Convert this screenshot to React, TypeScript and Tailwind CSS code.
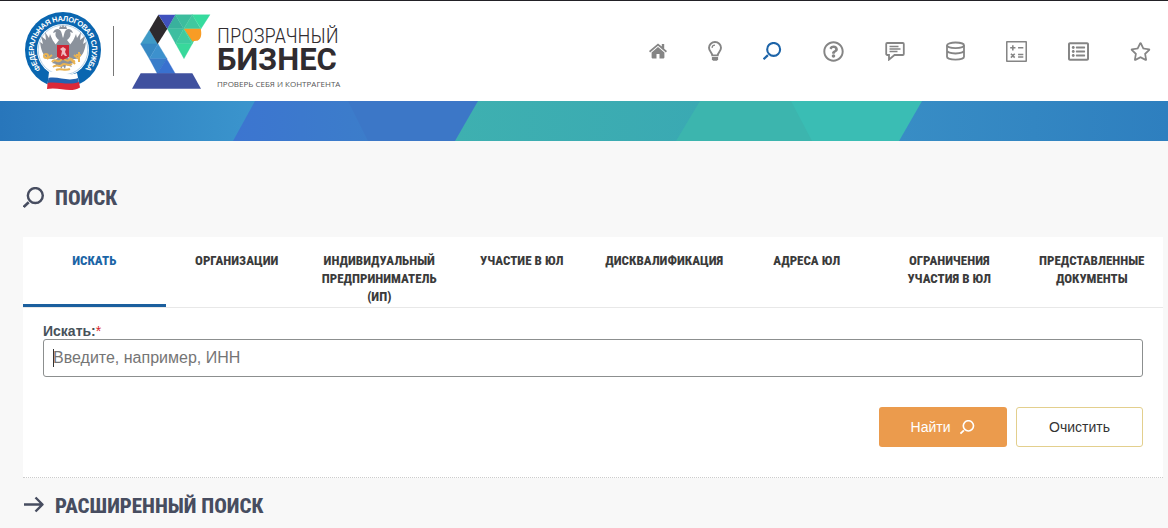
import type { ReactNode } from "react";
import { FaRegListAlt, FaRegQuestionCircle, FaRegStar } from "react-icons/fa";

const tabs = [
  "Искать",
  "Организации",
  "Индивидуальный предприниматель (ИП)",
  "Участие в ЮЛ",
  "Дисквалификация",
  "Адреса ЮЛ",
  "Ограничения участия в ЮЛ",
  "Представленные документы",
];

function SearchIcon({ className }: { className?: string }) {
  return (
    <svg viewBox="0 0 20 20" fill="none" stroke="currentColor" className={className} aria-hidden="true">
      <circle cx="11.200" cy="7.800" r="6.800" strokeWidth="2.200" />
      <path d="M5.200 13.900.6 18.200" strokeWidth="2.400" />
    </svg>
  );
}

function HomeIcon() {
  return (
    <svg viewBox="0 0 18 16" fill="currentColor" className="w-[18px]" aria-hidden="true">
      <path d="M9 .5 0 8.1l1.1 1.3L9 2.8l7.9 6.6L18 8.1l-2.8-2.4V1h-2.4v2.6z" />
      <path d="M9 4.1 2.600 9.400v5.200c0 .5.3.8.8.8h4.100v-4.500h3v4.500h4.100c.5 0 .8-.3.8-.8V9.400z" />
    </svg>
  );
}

function BulbIcon() {
  return (
    <svg viewBox="0 0 14 20" fill="none" stroke="currentColor" className="w-[14px]" aria-hidden="true">
      <path d="M4.300 14.400C4.100 11.500 1 10.200 1 6.800a6 5.800 0 0 1 12 0c0 3.400-3.100 4.700-3.300 7.600z" strokeWidth="1.900" />
      <path d="M4 6.900a3 3 0 0 1 3-2.800" strokeWidth="1.200" />
      <path d="M3.900 16h6.200v2.200L9 19.800H5l-1.100-1.600z" fill="currentColor" stroke="none" />
    </svg>
  );
}

function CommentIcon() {
  return (
    <svg viewBox="0 0 20 20" fill="none" stroke="currentColor" strokeWidth="1.800" className="w-5" aria-hidden="true">
      <path d="M2.200 2h15.600c.6 0 1 .4 1 1v10c0 .6-.4 1-1 1H9.500L4 18.600V14H2.200c-.6 0-1-.4-1-1V3c0-.6.4-1 1-1z" />
      <path d="M4.500 5.600h9M4.500 8.100h11M4.500 10.600h8" strokeWidth="1.500" />
    </svg>
  );
}

function DatabaseIcon() {
  return (
    <svg viewBox="0 0 19 20" fill="none" stroke="currentColor" strokeWidth="1.800" className="w-[19px]" aria-hidden="true">
      <ellipse cx="9.500" cy="4.300" rx="8.500" ry="2.800" />
      <path d="M1 4.300v11.400c0 1.600 3.800 2.900 8.500 2.900s8.500-1.300 8.500-2.900V4.300M1 9.600c0 1.600 3.800 2.900 8.500 2.900s8.500-1.300 8.500-2.900" />
    </svg>
  );
}

function CalcIcon() {
  return (
    <svg viewBox="0 0 20 20" fill="none" stroke="currentColor" strokeWidth="1.500" className="w-[21px]" aria-hidden="true">
      <rect x=".7" y=".7" width="18.600" height="18.600" rx=".6" />
      <path d="M4 6.500h5M6.500 4v5M11.500 6.500h5M11.500 12.800h5M11.500 15.200h5M4.700 12.200l3.600 3.600M8.300 12.200l-3.600 3.600" />
    </svg>
  );
}

function Emblem() {
  return (
    <svg viewBox="0 0 76 80" className="h-20 w-[76px] shrink-0" role="img" aria-label="ФНС России">
      <defs>
        <path id="ring" d="M18 63.500A31.500 31.500 0 1 1 58 63.500" />
      </defs>
      <circle cx="38" cy="39" r="38" fill="#0a66b0" />
      <circle cx="38" cy="39" r="26" fill="#fff" />
      <circle cx="38" cy="39" r="24.800" fill="none" stroke="#6fa5d0" strokeWidth=".5" />
      <text fill="#fff" fontSize="7.500" fontWeight="700" fontFamily="Liberation Sans, sans-serif">
        <textPath href="#ring" startOffset="50%" textAnchor="middle" dominantBaseline="central">
          ФЕДЕРАЛЬНАЯ НАЛОГОВАЯ СЛУЖБА
        </textPath>
      </text>
      {/* two-headed eagle */}
      <g fill="#8b929c">
        <path d="M34 29c-4-3-4-6-3-8l-3 1c1-4 5-5 7-3s2 6 3 8c1-2 1-6 3-8s6-1 7 3l-3-1c1 2 1 5-3 8l3 4-3 14h-8l-3-14z" />
        <path d="M33 35c-4-2-7-9-8-12l-1 4-4-6 1 8-5-4 2 8-3-2c1 8 3 13 7 16 4 2 8 1 11-1zM43 35c4-2 7-9 8-12l1 4 4-6-1 8 5-4-2 8 3-2c-1 8-3 13-7 16-4 2-8 1-11-1z" />
        <path d="M34 46l-7 6 4 1-2 3 6-2 1 4 2-3 2 3 1-4 6 2-2-3 4-1-7-6z" />
        <path d="M34 18h8l-1-3-2 1-1-3-1 3-2-1z" />
      </g>
      <g fill="none" stroke="#e9b353" strokeWidth="2">
        <path d="M27 44l-5 4M49 44l5 4M27 51c3-5 6 2 9-2s5 3 8 0 4 2 6 1M28 56c4-4 6 1 9-2s6 2 10-1M31 59c4-2 9 1 14-1" />
        <circle cx="21" cy="45" r="2" />
        <path d="M54 41v10M51 44h5M45 47l5 6" />
      </g>
      <path d="M32 34h12v11c0 2-3 2-6 4-3-2-6-2-6-4z" fill="#ce2434" />
      <path d="M36 45l1-5-2-2 3-2 3 2-1 3 2 4h-2l-2-2-1 2z" fill="#fff" opacity=".7" />
      <path d="M24 61c9-2 18 5 28 1l3 14c-10 6-21-1-33 2z" fill="#fff" />
      <path d="M23.400 67c10-2 19 4 29.600 0l1 5c-10 4-21-1-31.400 1z" fill="#2463b1" />
      <path d="M22.600 72c10-2 21 3 31.400-1l1 5.500c-10 6-21-1-33 1.500z" fill="#dc2838" />
    </svg>
  );
}

function Microscope() {
  return (
    <svg viewBox="36 40 237 225" className="h-[75px] w-[79px] shrink-0" aria-hidden="true">
      <g strokeWidth="1" strokeLinejoin="round">
        <path d="M62 130 88 88l26 42z" fill="#3f9ac6" stroke="#3f9ac6" />
        <path d="M62 130h52l-26 44z" fill="#3789c4" stroke="#3789c4" />
        <path d="m114 130 27 44H88z" fill="#3d91cd" stroke="#3d91cd" />
        <path d="M88 174h53l-29 45z" fill="#397dca" stroke="#397dca" />
        <path d="m140 174 26 45h-55z" fill="#3971cf" stroke="#3971cf" />
        <path d="m166 42 25 42h-49z" fill="#39b19d" stroke="#39b19d" />
        <path d="M166 42h51l-26 42z" fill="#3cbd9d" stroke="#3cbd9d" />
        <path d="m217 42 25 42h-51z" fill="#40c99f" stroke="#40c99f" />
        <path d="M217 42h53l-27 42z" fill="#36db9e" stroke="#36db9e" />
        <path d="M142 84h49l-24 45z" fill="#3dbea0" stroke="#3dbea0" />
        <path d="m191 84 26 45h-50z" fill="#3eca9f" stroke="#3eca9f" />
        <path d="M191 84h52l-26 45z" fill="#3fd7a1" stroke="#3fd7a1" />
        <path d="M167 129h50l-25 45z" fill="#38d89b" stroke="#38d89b" />
      </g>
      <path d="m115 42 27 42-29 46-25-42z" fill="#2e2a2e" />
      <path d="M115 42h51l-24 42z" fill="#3f51bd" />
      <path d="M192 84h50c4 17 2 31-10 36-5 1-10-1-14 3z" fill="#f89c25" />
      <path d="M62 218h155l26 46H36z" fill="#40519f" />
    </svg>
  );
}

const navItems: { label: string; icon: ReactNode }[] = [
  { label: "Главная", icon: <HomeIcon /> },
  { label: "О сервисе", icon: <BulbIcon /> },
  { label: "Поиск", icon: <SearchIcon className="w-[19px] text-[#1d64a8]" /> },
  { label: "Помощь", icon: <FaRegQuestionCircle size={21} /> },
  { label: "Обратная связь", icon: <CommentIcon /> },
  { label: "Данные", icon: <DatabaseIcon /> },
  { label: "Калькулятор", icon: <CalcIcon /> },
  { label: "Список", icon: <FaRegListAlt size={21} /> },
  { label: "Избранное", icon: <FaRegStar size={21} /> },
];

function Header() {
  return (
    <header className="flex h-[101px] items-center justify-between border-t border-[#222126] bg-white pr-[17px] pl-[25px]">
      <a href="#" className="flex items-center text-[#302c30]">
        <Emblem />
        <span className="mx-3 h-[50px] w-px bg-[#777]" />
        <span className="ml-1.5 flex items-center gap-1.5">
          <Microscope />
          <span className="flex flex-col pt-[18px]">
            <span className="font-['Roboto_Condensed','Roboto',sans-serif] text-[21px] leading-6 font-light">ПРОЗРАЧНЫЙ</span>
            <span className="font-['Roboto',sans-serif] text-[31px] leading-6 font-bold">БИЗНЕС</span>
            <span className="font-['Open_Sans',sans-serif] text-[8px] leading-6 text-[#555]">ПРОВЕРЬ СЕБЯ И КОНТРАГЕНТА</span>
          </span>
        </span>
      </a>
      <nav className="flex items-center gap-[41px] text-[#858585]">
        {navItems.map((item) => (
          <a key={item.label} href="#" aria-label={item.label}>
            {item.icon}
          </a>
        ))}
      </nav>
    </header>
  );
}

function Banner() {
  return (
    <svg viewBox="0 0 1168 40" preserveAspectRatio="none" className="block h-10 w-full" aria-hidden="true">
      <defs>
        <linearGradient id="left">
          <stop offset="0" stopColor="#2876bb" />
          <stop offset="1" stopColor="#3b95cd" />
        </linearGradient>
        <linearGradient id="right">
          <stop offset="0" stopColor="#388dc5" />
          <stop offset="1" stopColor="#2e7fbf" />
        </linearGradient>
        <linearGradient id="indigo">
          <stop offset="0" stopColor="#3c75d0" />
          <stop offset="1" stopColor="#3c7dca" />
        </linearGradient>
        <linearGradient id="teal">
          <stop offset="0" stopColor="#3eb0b0" />
          <stop offset="1" stopColor="#3aa9b3" />
        </linearGradient>
      </defs>
      <path d="M0 0h257v40H0z" fill="url(#left)" />
      <path d="M255 0h95l20 40H233z" fill="url(#indigo)" />
      <path d="M348 0h131v40H368z" fill="#3c77c7" />
      <path d="M478 0h224v40H455z" fill="url(#teal)" />
      <path d="M700 0h93l20 40H676z" fill="#3cb5ae" />
      <path d="M791 0h132v40H812z" fill="#3abdb4" />
      <path d="M922 0h246v40H899z" fill="url(#right)" />
    </svg>
  );
}

function Tabs() {
  return (
    <div role="tablist" className="grid grid-cols-8 border-b border-[#e8e8e8]">
      {tabs.map((tab, i) => (
        <button
          key={tab}
          type="button"
          role="tab"
          aria-selected={i === 0}
          className={
            "flex h-[70px] justify-center border-b-3 px-2 pt-[15px] font-['Roboto_Condensed','Liberation_Sans_Narrow',sans-serif] text-[13px] leading-[18px] font-extrabold uppercase " +
            (i === 0 ? "border-[#1b5f9e] text-[#1b65a6]" : "border-transparent text-[#3b3b3b]")
          }
        >
          {tab}
        </button>
      ))}
    </div>
  );
}

function SectionTitle({ icon, children }: { icon: ReactNode; children: ReactNode }) {
  return (
    <h2 className="flex items-center gap-2.5 font-['Roboto_Condensed','Liberation_Sans_Narrow',sans-serif] text-[21px] leading-7 font-extrabold text-[#474d60] uppercase">
      {icon}
      {children}
    </h2>
  );
}

export default function App() {
  return (
    <div className="min-h-screen bg-[#f8f8f8] font-['Liberation_Sans',Arial,sans-serif]">
      <Header />
      <Banner />
      <main className="pt-[43px] pr-[5px] pl-[23px]">
        <SectionTitle icon={<SearchIcon className="w-[22px]" />}>Поиск</SectionTitle>

        <section className="mt-[25px] border-b border-dotted border-[#ccc] bg-white">
          <Tabs />
          <form className="px-5 pt-[15px] pb-[30px]" onSubmit={(e) => e.preventDefault()}>
            <label htmlFor="query" className="block text-[14px] leading-4 font-bold text-[#47525a]">
              Искать:<span className="font-normal text-[#d8222c]">*</span>
            </label>
            <div className="relative">
              <input
                id="query"
                type="text"
                placeholder="Введите, например, ИНН"
                className="peer block h-[38px] w-full rounded-[3px] border border-[#8c8f8f] bg-white px-[9px] text-base outline-none placeholder:text-[#757575]"
              />
              <span className="pointer-events-none absolute top-2.5 left-2.5 h-[18px] w-px bg-[#333] peer-focus:hidden" />
            </div>
            <div className="mt-[30px] flex justify-end gap-[9px] text-[14px]">
              <button
                type="submit"
                className="flex h-10 w-32 items-center justify-center gap-2.5 rounded-[3px] bg-[#eb9b4d] text-white"
              >
                Найти
                <SearchIcon className="w-[15px]" />
              </button>
              <button type="reset" className="h-10 w-[127px] rounded-[3px] border border-[#e3cf8d] bg-white text-[#333]">
                Очистить
              </button>
            </div>
          </form>
        </section>

        <div className="pt-3.5 pb-2">
          <SectionTitle
            icon={
              <svg viewBox="0 0 22 20" fill="none" stroke="currentColor" strokeWidth="2.400" className="w-[22px]" aria-hidden="true">
                <path d="M1 8.500h18M12.500 1.500l7 7-7 7" strokeLinejoin="round" />
              </svg>
            }
          >
            Расширенный поиск
          </SectionTitle>
        </div>
      </main>
    </div>
  );
}
